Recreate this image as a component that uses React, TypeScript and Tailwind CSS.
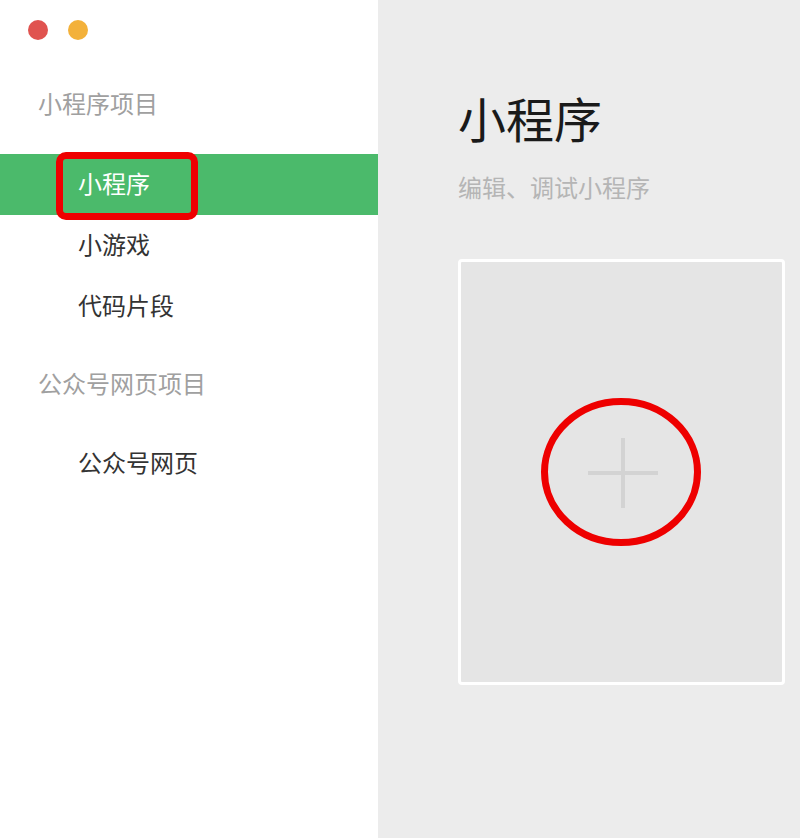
const font = { fontFamily: '"Noto Sans CJK SC", "Noto Sans", sans-serif' }

function NavItem({ label, active }: { label: string; active?: boolean }) {
	return (
		<div
			className={`relative flex h-[61px] items-center pb-[3px] pl-[78px] text-[24px] leading-[30px] ${active ? 'bg-[#4bba6b] text-white' : 'text-[#333333]'}`}
		>
			{label}
			{active && (
				<div className="pointer-events-none absolute left-[56px] top-[-2px] h-[68px] w-[142px] rounded-[10px] border-[7px] border-[#ee0000]" />
			)}
		</div>
	)
}

export default function App() {
	return (
		<div className="flex h-[838px] w-[800px] overflow-hidden" style={font}>
			<aside className="flex w-[378px] shrink-0 flex-col bg-white">
				<div className="flex h-[60px] items-center gap-[20px] pl-[28px]">
					<span className="h-[20px] w-[20px] rounded-full bg-[#e0534f]" />
					<span className="h-[20px] w-[20px] rounded-full bg-[#f3b13a]" />
				</div>
				<div className="h-[94px] pl-[38px] pt-[28px] text-[24px] leading-[30px] text-[#a0a0a0]">小程序项目</div>
				<NavItem label="小程序" active />
				<NavItem label="小游戏" />
				<NavItem label="代码片段" />
				<div className="h-[96px] pl-[38px] pt-[31px] text-[24px] leading-[30px] text-[#a0a0a0]">公众号网页项目</div>
				<NavItem label="公众号网页" />
			</aside>

			<main className="flex-1 bg-[#ececec] pl-[80px] pt-[90px]">
				<h1 className="text-[48px] leading-[54px] text-[#1a1a1a]">小程序</h1>
				<p className="mt-[28px] text-[24px] leading-[30px] text-[#b5b5b5]">编辑、调试小程序</p>
				<div className="relative mt-[57px] flex h-[426px] w-[327px] items-center justify-center rounded-[4px] border-[3px] border-white bg-[#e5e5e5]">
					<svg width="70" height="70" viewBox="0 0 70 70" className="translate-x-[1px] translate-y-[1px]">
						<line x1="0" y1="35" x2="70" y2="35" stroke="#d3d3d3" strokeWidth="4" />
						<line x1="35" y1="0" x2="35" y2="70" stroke="#d3d3d3" strokeWidth="4" />
					</svg>
					<svg width="160" height="148" viewBox="0 0 160 148" className="pointer-events-none absolute left-[80px] top-[136px]">
						<ellipse cx="80" cy="74" rx="76.5" ry="70.5" fill="none" stroke="#ee0000" strokeWidth="7" />
					</svg>
				</div>
			</main>
		</div>
	)
}
